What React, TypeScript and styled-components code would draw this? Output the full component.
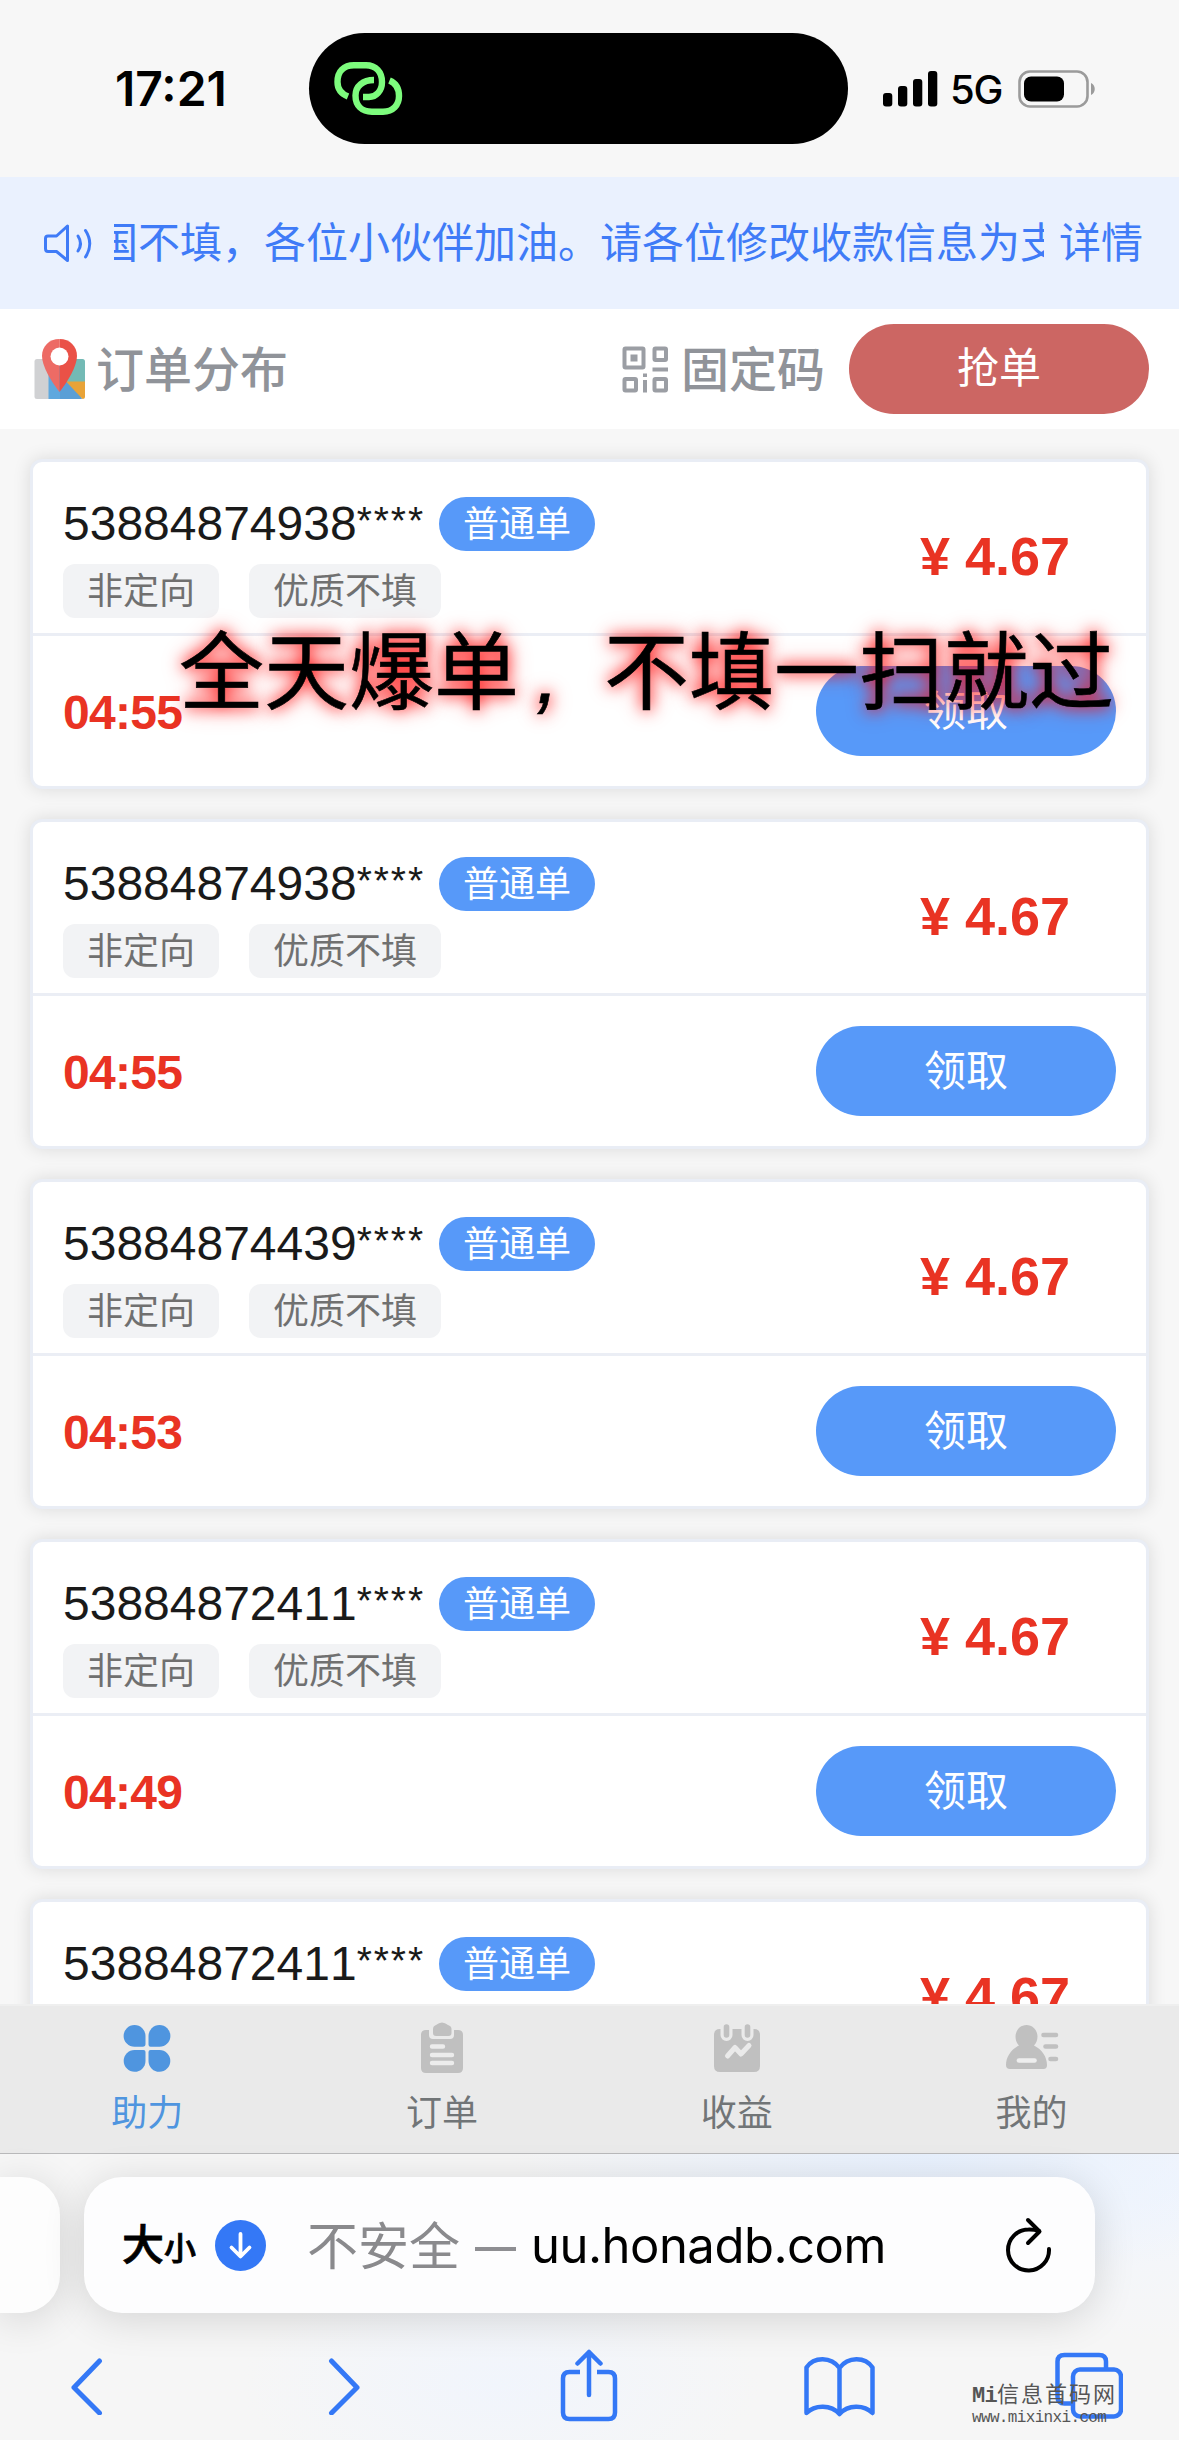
import React from "react";
import styled, { createGlobalStyle } from "styled-components";

const GlobalStyle = createGlobalStyle`
  * { box-sizing: border-box; }
  body {
    margin: 0;
    background: #f7f7f7;
    font-family: "Liberation Sans", "Noto Sans CJK SC", sans-serif;
  }
  svg { display: block; flex: none; }
`;

const Screen = styled.div`
  position: relative;
  display: flex;
  flex-direction: column;
  width: 1179px;
  height: 2440px;
  overflow: hidden;
  background: #f7f7f7;
`;

/* ---------- status bar ---------- */

const StatusBar = styled.header`
  display: grid;
  grid-template-columns: 309px 539px 1fr;
  align-items: center;
  height: 177px;
  flex: none;
`;

const Clock = styled.div`
  padding-left: 115px;
  font: 600 48px/60px Inter, sans-serif;
  color: #000;
`;

const Island = styled.div`
  display: flex;
  align-items: center;
  height: 111px;
  padding-left: 21px;
  border-radius: 56px;
  background: #000;
`;

const Signals = styled.div`
  display: flex;
  align-items: center;
  padding-left: 35px;
`;

const Network = styled.span`
  flex: none;
  width: 80px;
  padding: 2px 0 0 12px;
  font: 500 40px/48px Inter, sans-serif;
  letter-spacing: -1.2px;
  color: #000;
  white-space: nowrap;
`;

/* ---------- notice ---------- */

const Notice = styled.section`
  display: flex;
  align-items: center;
  height: 132px;
  flex: none;
  padding-left: 43px;
  background: #eaf1fe;
  color: #3f7bf7;
  font-size: 42px;
  line-height: 60px;
`;

const Marquee = styled.div`
  display: flex;
  width: 930px;
  margin: 0 15px 0 22px;
  padding-top: 1px;
  overflow: hidden;
  white-space: nowrap;
`;

const MarqueeText = styled.span`
  margin-left: -18px;
`;

const NoticeLink = styled.span`
  padding-top: 2px;
`;

/* ---------- page header ---------- */

const PageHeader = styled.section`
  display: flex;
  align-items: center;
  justify-content: space-between;
  height: 120px;
  flex: none;
  padding: 0 30px 0 34px;
  background: #fff;
`;

const HeaderGroup = styled.div`
  display: flex;
  align-items: center;
`;

const HeaderLabel = styled.span<{ $gap: number }>`
  padding: 4px 0 0 ${(p) => p.$gap}px;
  font-size: 48px;
  font-weight: 500;
  line-height: 60px;
  color: #909399;
`;

const PillButton = styled.button<{ $color: string; $top?: number; $left?: number }>`
  width: 300px;
  height: 90px;
  margin-left: ${(p) => p.$left ?? 0}px;
  padding: ${(p) => p.$top ?? 0}px 0 0;
  border: 0;
  border-radius: 45px;
  background: ${(p) => p.$color};
  color: #fff;
  font-family: inherit;
  font-size: 42px;
  line-height: 60px;
`;

/* ---------- order list ---------- */

const OrderList = styled.main`
  display: flex;
  flex-direction: column;
  flex: 1;
  min-height: 0;
  gap: 30px;
  padding: 30px 30px 0;
  overflow: hidden;
`;

const Card = styled.article`
  flex: none;
  height: 330px;
  border: 3px solid #e9edf5;
  border-radius: 12px;
  background: #fff;
  box-shadow: 0 0 18px rgba(0, 0, 0, 0.12);
`;

const CardTop = styled.div`
  display: flex;
  justify-content: space-between;
  height: 174px;
  padding-left: 30px;
  border-bottom: 3px solid #ebeef5;
`;

const Info = styled.div`
  display: flex;
  flex-direction: column;
  gap: 13px;
  padding-top: 35px;
`;

const Row = styled.div<{ $gap: number }>`
  display: flex;
  align-items: center;
  gap: ${(p) => p.$gap}px;
`;

const OrderNo = styled.span`
  width: 361px;
  font-size: 48px;
  font-kerning: none;
  line-height: 54px;
  color: #1a1a1a;
  white-space: nowrap;
`;

const Mask = styled.span`
  font-size: 39px;
  line-height: 0;
  vertical-align: 6px;
  letter-spacing: 1.9px;
`;

const Chip = styled.span<{ $solid?: boolean }>`
  height: 54px;
  padding: 0 24px;
  border-radius: ${(p) => (p.$solid ? 27 : 12)}px;
  background: ${(p) => (p.$solid ? "#5799f9" : "#f2f3f5")};
  color: ${(p) => (p.$solid ? "#fff" : "#707070")};
  font-size: 36px;
  line-height: 56px;
  white-space: nowrap;
`;

const Price = styled.div`
  width: 302px;
  padding-top: 64px;
  color: #e93323;
  font-size: 54px;
  font-weight: 700;
  line-height: 60px;
  text-align: center;
`;

const CardBottom = styled.div`
  display: flex;
  align-items: center;
  justify-content: space-between;
  height: 150px;
  padding: 0 30px;
`;

const Timer = styled.span`
  padding-top: 3px;
  color: #e93323;
  font-size: 48px;
  font-weight: 700;
  line-height: 60px;
  letter-spacing: -0.7px;
`;

const Slogan = styled.div`
  position: absolute;
  left: 179px;
  top: 614px;
  font-size: 85px;
  font-weight: 400;
  line-height: 120px;
  color: #000;
  white-space: nowrap;
  text-shadow: 0 0 15px #f00, 0 0 24px rgba(255, 0, 0, 0.45);
  -webkit-text-stroke: 0.6px #000;
`;

const SloganComma = styled.i`
  display: inline-block;
  width: 85px;
  padding-right: 28px;
  text-align: center;
`;

/* ---------- tab bar ---------- */

const TabBar = styled.nav`
  display: grid;
  grid-template-columns: repeat(4, 1fr);
  height: 150px;
  flex: none;
  border-top: 2px solid #efefef;
  border-bottom: 1px solid #b9b9bb;
  background: #eaeaea;
`;

const Tab = styled.a<{ $active?: boolean }>`
  display: flex;
  flex-direction: column;
  align-items: center;
  gap: 13px;
  padding-top: 16px;
  color: ${(p) => (p.$active ? "#4f95df" : "#717577")};
  font-size: 36px;
  line-height: 54px;
`;

/* ---------- browser chrome ---------- */

const Browser = styled.footer`
  display: flex;
  flex-direction: column;
  height: 286px;
  flex: none;
  padding-top: 23px;
  background:
    radial-gradient(420px 130px at 930px 0, #e8f1fe, transparent),
    radial-gradient(300px 160px at 1179px 30px, #f2f6fd, transparent),
    radial-gradient(260px 120px at 500px 230px, #f1f5fc, transparent),
    #f6f6f6;
`;

const AddressRow = styled.div`
  display: flex;
  gap: 24px;
  height: 136px;
`;

const PreviousTab = styled.div`
  width: 60px;
  border-radius: 0 38px 38px 0;
  background: #fdfdfd;
  box-shadow: 0 6px 42px rgba(0, 0, 0, 0.14);
`;

const AddressBar = styled.div`
  display: flex;
  align-items: center;
  width: 1011px;
  padding: 0 43px 0 38px;
  border-radius: 38px;
  background: #fdfdfe;
  box-shadow: 0 6px 42px rgba(0, 0, 0, 0.14);
  white-space: nowrap;
`;

const TextSize = styled.span`
  display: flex;
  align-items: baseline;
  width: 93px;
  padding-top: 5px;
  font-weight: 500;
  line-height: 60px;
  color: #000;
  -webkit-text-stroke: 0.8px #000;
`;

const Glyph = styled.span<{ $size: number }>`
  font-size: ${(p) => p.$size}px;
`;

const Insecure = styled.span`
  margin-left: 41px;
  width: 168px;
  padding-top: 5px;
  font-size: 51px;
  line-height: 70px;
  color: #8a8a8d;
`;

const Dash = styled.span`
  width: 41px;
  height: 4px;
  margin-top: 8px;
  background: #8e8e92;
`;

const Domain = styled.span`
  margin-left: 15px;
  flex: 1;
  padding-top: 2px;
  font: 400 49px/70px Inter, sans-serif;
  letter-spacing: -0.5px;
  color: #000;
`;

const Toolbar = styled.div`
  display: grid;
  grid-template-columns: 258px 232px 243px 252px 1fr;
  align-items: center;
  height: 84px;
  margin-top: 31px;
  padding-left: 70px;
`;

const Watermark = styled.div`
  position: absolute;
  left: 972px;
  top: 2384px;
  color: #555;
`;

const WatermarkTitle = styled.div`
  font: 22px/26px "Liberation Mono", "Noto Sans CJK SC", monospace;
  letter-spacing: 2px;
  white-space: nowrap;
`;

const WatermarkPrefix = styled.b`
  letter-spacing: -0.7px;
`;

const WatermarkUrl = styled.div`
  font: 16px/16px "Liberation Mono", monospace;
  letter-spacing: -0.65px;
`;

/* ---------- icons ---------- */

const LinkIcon = () => (
  <svg width="76" height="62" viewBox="0 0 76 62" fill="none" stroke="#7dfc7d" strokeWidth="6.4">
    <path d="M18 38.500C10.500 35.500 7.500 30 7.500 24C7.500 13 14 7.300 24 7.300H36C46 7.300 52 14 52 24C52 33 46 39 39 39H33" />
    <path d="M44 22C33 22 25.500 28 25.500 37.500C25.500 48 32 53.700 42 53.700H53C63 53.700 69 47 69 38C69 30.500 65.500 25 59.500 22.500" />
  </svg>
);

const SignalIcon = () => (
  <svg width="55" height="36" viewBox="0 0 55 36">
    <rect x="0" y="22" width="9.300" height="13.500" rx="3" />
    <rect x="15" y="15" width="9.300" height="20.500" rx="3" />
    <rect x="30" y="8" width="9.300" height="27.500" rx="3" />
    <rect x="45" y="0" width="9.300" height="35.500" rx="3" />
  </svg>
);

const BatteryIcon = () => (
  <svg width="80" height="38" viewBox="0 0 80 38">
    <rect x="1.500" y="1.500" width="68" height="35" rx="10.500" fill="none" stroke="#9b9b9b" strokeWidth="2.600" />
    <rect x="6" y="6.500" width="40" height="25" rx="7" />
    <path d="M73 13C78 15 78 23 73 25Z" fill="#9b9b9b" />
  </svg>
);

const SpeakerIcon = () => (
  <svg width="49" height="39" viewBox="0 0 49 39" fill="none" stroke="#3f7bf7" strokeWidth="3" strokeLinecap="round" strokeLinejoin="round">
    <path d="M24.500 2V36.500L13.500 27.500H5Q2.500 27.500 2.500 24.500V14.500Q2.500 12 5 12H13.500Z" />
    <path d="M35 12Q40 19.500 35 27" />
    <path d="M42.500 6.500Q51 19.500 42.500 33" />
  </svg>
);

const MapIcon = () => (
  <svg width="51" height="60" viewBox="0 0 51 60">
    <path d="M3 20H15V60H3Q.5 60 .5 57.500V22.500Q.5 20 3 20Z" fill="#d0d1d3" />
    <path d="M14.500 20H26V60H14.500Z" fill="#5fa8de" />
    <path d="M26 20H32L48 60H26Z" fill="#5a9fd6" />
    <path d="M30 20H48.500Q51 20 51 22.500V43H30Z" fill="#73bab5" />
    <path d="M32 42.500H51V57.500Q51 60 48.500 60Z" fill="#e8a338" />
    <path d="M25.500 0C15 0 8 7.500 8 17C8 27 17 42 25.500 53Z" fill="#ed6b65" />
    <path d="M25.500 0C36 0 43 7.500 43 17C43 27 34 42 25.500 53Z" fill="#ea5147" />
    <circle cx="25.500" cy="17.500" r="9" fill="#fff" />
  </svg>
);

const QrIcon = () => (
  <svg width="47" height="47" viewBox="0 0 47 47" fill="none" stroke="#9b9ea4" strokeWidth="4">
    <rect x="2.500" y="2.500" width="19" height="19" rx="1" />
    <rect x="8.500" y="8.500" width="7" height="7" fill="#9b9ea4" stroke="none" />
    <rect x="32.500" y="2.500" width="11.500" height="11.500" rx="1" />
    <rect x="2.500" y="33" width="11.500" height="11.500" rx="1" />
    <rect x="32.500" y="33" width="11.500" height="11.500" rx="1" />
    <path d="M30.500 23.500H46M23 27.500V31M23 34V46.500" />
  </svg>
);

const CloverIcon = () => (
  <svg width="52" height="52" viewBox="0 0 52 52" fill="#4f95df">
    <path d="M13.500 3A11 11 0 0 1 24.500 14V22Q24.500 24.800 21.700 24.800H13.500A10.900 10.900 0 0 1 13.500 3Z" />
    <path d="M38.500 3A10.900 10.900 0 0 1 38.500 24.800H29.500Q27.500 24.800 27.500 22.500V14A11 11 0 0 1 38.500 3Z" />
    <path d="M13.500 28H22.500Q24.500 28 24.500 30V39A10.900 10.900 0 1 1 13.500 28Z" />
    <path d="M29.500 28H38.500A10.900 10.900 0 1 1 27.500 39V30Q27.500 28 29.500 28Z" />
  </svg>
);

const ClipboardIcon = () => (
  <svg width="52" height="52" viewBox="0 0 52 52">
    <path d="M10 8H13V13Q13 17 17 17H34Q38 17 38 13V8H42Q47 8 47 13V46Q47 51 42 51H10Q5 51 5 46V13Q5 8 10 8Z" fill="#c0c0c0" />
    <path d="M17 5H35V11Q35 14 32.500 14H20Q17 14 17 11Z" stroke="#eaeaea" strokeWidth="5" fill="none" />
    <path d="M20 3Q26-2 32 3Q35.500 4 35.500 7V11Q35.500 14 32.500 14H20Q17 14 17 11V7Q17 4 20 3Z" fill="#c0c0c0" />
    <path d="M16 24.500H27M16 33H36M16 41H36" stroke="#ececec" strokeWidth="4.400" strokeLinecap="round" />
  </svg>
);

const CalendarIcon = () => (
  <svg width="52" height="52" viewBox="0 0 52 52" fill="none" strokeLinecap="round" strokeLinejoin="round">
    <path d="M9 7H43Q49 7 49 13V44Q49 50 43 50H9Q3 50 3 44V13Q3 7 9 7Z" fill="#c0c0c0" />
    <path d="M15.500 4V13M36.500 4V13" stroke="#eaeaea" strokeWidth="12" />
    <path d="M15.500 5V13M36.500 5V13" stroke="#c0c0c0" strokeWidth="5.600" />
    <path d="M16.500 34L24 25.500L30 32L38 23.500" stroke="#eaeaea" strokeWidth="5" />
  </svg>
);

const UserIcon = () => (
  <svg width="54" height="52" viewBox="0 0 54 52">
    <path d="M21.500 3C28 3 32.500 8.500 32.500 14.500C32.500 18.500 31 21.500 29 23.500C37 27.500 42 35 42 43Q42 47 38.500 47H5Q1 47 1 43C1 35 6 27.500 14 23.500C12 21.500 10.500 18.500 10.500 14.500C10.500 8.500 15 3 21.500 3Z" fill="#c0c0c0" />
    <path d="M14 38.500H29.500" stroke="#eee" strokeWidth="4.600" strokeLinecap="round" />
    <path d="M38.500 13H51M40.500 24.500H51M45.500 37H51" stroke="#c0c0c0" strokeWidth="4.600" strokeLinecap="round" />
  </svg>
);

const DownloadIcon = () => (
  <svg width="51" height="51" viewBox="0 0 51 51">
    <circle cx="25.500" cy="25.500" r="25.500" fill="#3478f6" />
    <path d="M25.500 14V36M16.500 27.500L25.500 36.500L34.500 27.500" fill="none" stroke="#fff" strokeWidth="3.800" strokeLinecap="round" strokeLinejoin="round" />
  </svg>
);

const ReloadIcon = () => (
  <svg width="46" height="56" viewBox="0 0 46 56" fill="none" stroke="#000" strokeWidth="4" strokeLinecap="round" strokeLinejoin="round">
    <path d="M43 32A20.500 20.500 0 1 1 22.500 12.500Q28 12.300 33 14" />
    <path d="M22 3L33.500 14.500L22 26" />
  </svg>
);

const Chevron = ({ forward }: { forward?: boolean }) => (
  <svg width="33" height="58" viewBox="0 0 33 58" fill="none" stroke="#3478f6" strokeWidth="5" strokeLinecap="round" strokeLinejoin="round">
    <path d={forward ? "M3.500 4L29 30.500L3.500 56" : "M29.500 4L4 30.500L29.500 56"} />
  </svg>
);

const ShareIcon = () => (
  <svg width="58" height="74" viewBox="0 0 58 74" fill="none" stroke="#3478f6" strokeWidth="4.500" strokeLinejoin="round">
    <path d="M20 23H9.500Q3 23 3 29.500V63.500Q3 70 9.500 70H48.500Q55 70 55 63.500V29.500Q55 23 48.500 23H37" />
    <path d="M29 46V3M17.500 14.500L29 3L40.500 14.500" strokeLinecap="round" />
  </svg>
);

const BookIcon = () => (
  <svg width="73" height="62" viewBox="0 0 73 62" fill="none" stroke="#3478f6" strokeWidth="4.500" strokeLinejoin="round">
    <path d="M36.500 13C28 1.500 11 1.500 3.500 12.500V58C12 49.500 28 49.500 36.500 59C45 49.500 61 49.500 69.500 58V12.500C62 1.500 45 1.500 36.500 13ZM36.500 13V59" />
  </svg>
);

const TabsIcon = () => (
  <svg width="68" height="68" viewBox="0 0 68 68" fill="none" stroke="#3478f6" strokeWidth="4.500">
    <path d="M16 51.500H9.500Q2.500 51.500 2.500 44.500V9.500Q2.500 3 9.500 3H44Q51 3 51 9.500V16" />
    <rect x="18" y="17.500" width="48" height="47" rx="7" />
  </svg>
);

const ORDERS = [
  { no: "53884874938", time: "04:55" },
  { no: "53884874938", time: "04:55" },
  { no: "53884874439", time: "04:53" },
  { no: "53884872411", time: "04:49" },
  { no: "53884872411", time: "04:49" },
];

const OrderCard = ({ no, time }: { no: string; time: string }) => (
  <Card>
    <CardTop>
      <Info>
        <Row $gap={15}>
          <OrderNo>
            {no}
            <Mask>****</Mask>
          </OrderNo>
          <Chip $solid>普通单</Chip>
        </Row>
        <Row $gap={30}>
          <Chip>非定向</Chip>
          <Chip>优质不填</Chip>
        </Row>
      </Info>
      <Price>¥ 4.67</Price>
    </CardTop>
    <CardBottom>
      <Timer>{time}</Timer>
      <PillButton $color="#5799f9" $top={2}>领取</PillButton>
    </CardBottom>
  </Card>
);

export default function App() {
  return (
    <Screen>
      <GlobalStyle />
      <StatusBar>
        <Clock>17:21</Clock>
        <Island>
          <LinkIcon />
        </Island>
        <Signals>
          <SignalIcon />
          <Network>5G</Network>
          <BatteryIcon />
        </Signals>
      </StatusBar>
      <Notice>
        <SpeakerIcon />
        <Marquee>
          <MarqueeText>国不填，各位小伙伴加油。请各位修改收款信息为支</MarqueeText>
        </Marquee>
        <NoticeLink>详情</NoticeLink>
      </Notice>
      <PageHeader>
        <HeaderGroup>
          <MapIcon />
          <HeaderLabel $gap={11}>订单分布</HeaderLabel>
        </HeaderGroup>
        <HeaderGroup>
          <QrIcon />
          <HeaderLabel $gap={12}>固定码</HeaderLabel>
          <PillButton $color="#cc6663" $left={24}>抢单</PillButton>
        </HeaderGroup>
      </PageHeader>
      <OrderList>
        {ORDERS.map((order, i) => (
          <OrderCard key={i} {...order} />
        ))}
      </OrderList>
      <Slogan>
        全天爆单<SloganComma>,</SloganComma>不填一扫就过
      </Slogan>
      <TabBar>
        <Tab $active>
          <CloverIcon />
          助力
        </Tab>
        <Tab>
          <ClipboardIcon />
          订单
        </Tab>
        <Tab>
          <CalendarIcon />
          收益
        </Tab>
        <Tab>
          <UserIcon />
          我的
        </Tab>
      </TabBar>
      <Browser>
        <AddressRow>
          <PreviousTab />
          <AddressBar>
            <TextSize>
              <Glyph $size={42}>大</Glyph>
              <Glyph $size={32}>小</Glyph>
            </TextSize>
            <DownloadIcon />
            <Insecure>不安全</Insecure>
            <Dash />
            <Domain>uu.honadb.com</Domain>
            <ReloadIcon />
          </AddressBar>
        </AddressRow>
        <Toolbar>
          <Chevron />
          <Chevron forward />
          <ShareIcon />
          <BookIcon />
          <TabsIcon />
        </Toolbar>
      </Browser>
      <Watermark>
        <WatermarkTitle>
          <WatermarkPrefix>Mi</WatermarkPrefix>信息首码网
        </WatermarkTitle>
        <WatermarkUrl>www.mixinxi.com</WatermarkUrl>
      </Watermark>
    </Screen>
  );
}
